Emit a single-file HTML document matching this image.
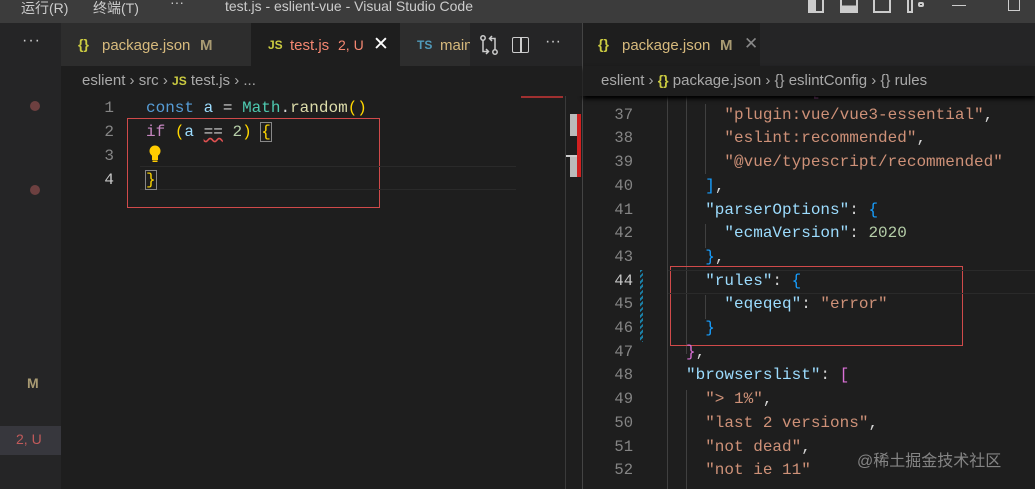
<!DOCTYPE html>
<html><head><meta charset="utf-8"><style>
*{margin:0;padding:0;box-sizing:border-box}
body{width:1035px;height:489px;overflow:hidden;background:#1e1e1e;position:relative;font-family:"Liberation Sans","Noto Sans CJK SC",sans-serif;color:#ccc}
.a{position:absolute;white-space:pre}
.m{font-family:"Liberation Mono",monospace}
.ln{color:#858585;text-align:right;width:40px}
.s{color:#ce9178}.k{color:#9cdcfe}.p{color:#d4d4d4}.b{color:#179fff}.y{color:#ffd700}.v{color:#da70d6}.kw{color:#569cd6}.c{color:#c586c0}.n{color:#b5cea8}.f{color:#dcdcaa}.t{color:#4ec9b0}
</style></head><body>
<!-- title bar -->
<div class="a" style="left:0;top:0;width:1035px;height:23px;background:#3c3c3c"></div>
<div class="a" style="left:21px;top:-2px;font-size:14px;color:#ccc">运行(R)</div>
<div class="a" style="left:93px;top:-2px;font-size:14px;color:#ccc">终端(T)</div>
<div class="a" style="left:170px;top:-6px;font-size:14px;color:#ccc">···</div>
<div class="a" style="left:225px;top:-2px;font-size:14px;color:#ccc">test.js - eslient-vue - Visual Studio Code</div>
<div class="a" style="left:808px;top:0;width:16px;height:13px;border:2px solid #ccc;border-top:none;background:linear-gradient(90deg,#ccc 50%,transparent 50%)"></div>
<div class="a" style="left:840px;top:0;width:18px;height:13px;border:2px solid #ccc;border-top:none;background:linear-gradient(0deg,#ccc 50%,transparent 50%)"></div>
<div class="a" style="left:873px;top:0;width:18px;height:13px;border:2px solid #ccc;border-top:none"></div>
<div class="a" style="left:907px;top:0;width:6px;height:13px;border:2px solid #ccc;border-top:none"></div>
<div class="a" style="left:918px;top:2px;width:6px;height:5px;border:2px solid #ccc;border-radius:2px"></div>
<div class="a" style="left:952px;top:5px;width:14px;height:1px;background:#ccc"></div>
<div class="a" style="left:1008px;top:0;width:12px;height:11px;border:1px solid #ccc;border-top:none"></div>
<!-- activity / sidebar -->
<div class="a" style="left:0;top:23px;width:61px;height:466px;background:#252526"></div>
<div class="a" style="left:22px;top:32px;font-size:16px;color:#ccc;letter-spacing:1px">···</div>
<div class="a" style="left:30px;top:101px;width:10px;height:10px;border-radius:50%;background:#6d4040"></div>
<div class="a" style="left:30px;top:185px;width:10px;height:10px;border-radius:50%;background:#6d4040"></div>
<div class="a" style="left:27px;top:375px;font-size:14px;font-weight:bold;color:#a89a72">M</div>
<div class="a" style="left:0;top:426px;width:61px;height:29px;background:#37373d"></div>
<div class="a" style="left:16px;top:431px;font-size:14px;color:#c05a5a">2, U</div>
<!-- left tab bar -->
<div class="a" style="left:61px;top:23px;width:522px;height:43px;background:#252526"></div>
<div class="a" style="left:61px;top:23px;width:190px;height:43px;background:#2d2d2d"></div>
<div class="a" style="left:78px;top:36px;font-size:14px;color:#cbcb41;font-weight:bold">{}</div>
<div class="a" style="left:102px;top:37px;font-size:15px;color:#d7ba7d">package.json</div>
<div class="a" style="left:200px;top:37px;font-size:15px;color:#a89a72;font-weight:bold">M</div>
<div class="a" style="left:251px;top:23px;width:149px;height:43px;background:#1e1e1e"></div>
<div class="a" style="left:268px;top:38px;font-size:12px;color:#cbcb41;font-weight:bold">JS</div>
<div class="a" style="left:290px;top:37px;font-size:15px;color:#f48771">test.js</div>
<div class="a" style="left:338px;top:37px;font-size:14px;color:#f48771">2, U</div>
<div class="a" style="left:373px;top:33px;font-size:19px;color:#fff">✕</div>
<div class="a" style="left:400px;top:23px;width:70px;height:43px;background:#2d2d2d;overflow:hidden">
 <div class="a" style="left:17px;top:15px;font-size:12px;color:#519aba;font-weight:bold">TS</div>
 <div class="a" style="left:40px;top:14px;font-size:15px;color:#d7ba7d">main</div></div>
<svg class="a" style="left:478px;top:34px" width="22" height="22" viewBox="0 0 22 22" fill="none" stroke="#ccc" stroke-width="1.5"><circle cx="5" cy="4" r="2.2"/><circle cx="17" cy="18" r="2.2"/><path d="M5 6.5v11h5M8 15l2.5 2.5L8 20M17 15.5v-11h-5M14 7L11.5 4.5 14 2"/></svg>
<div class="a" style="left:512px;top:37px;width:17px;height:16px;border:1.5px solid #ccc;border-radius:2px"></div>
<div class="a" style="left:520px;top:37px;width:1.5px;height:16px;background:#ccc"></div>
<div class="a" style="left:545px;top:33px;font-size:16px;color:#ccc">···</div>
<!-- left code -->
<div class="a" style="left:127px;top:118px;width:253px;height:90px;border:1px solid #d04a4a"></div>
<div class="a" style="left:140px;top:166px;width:376px;height:24px;border-top:1px solid #2a2a2a;border-bottom:1px solid #2a2a2a"></div>
<div class="a m ln" style="left:74px;top:96px;font-size:16px;line-height:24px">1
2
3
<span style="color:#c6c6c6">4</span></div>
<div class="a m" style="left:146px;top:96px;font-size:16px;line-height:24px"><span class="kw">const</span> <span class="k">a</span> <span class="p">=</span> <span class="t">Math</span><span class="p">.</span><span class="f">random</span><span class="y">()</span>
<span class="c">if</span> <span class="y">(</span><span class="k">a</span> <span class="p" style="text-decoration:underline wavy #e05050">==</span> <span class="n">2</span><span class="y">)</span> <span class="y" style="outline:1px solid #888">{</span>

<span class="y" style="outline:1px solid #888">}</span></div>
<svg class="a" style="left:148px;top:145px" width="14" height="18" viewBox="0 0 14 18"><circle cx="7" cy="6" r="5.5" fill="#ffcc00"/><rect x="4" y="10" width="6" height="5" fill="#ffcc00"/><rect x="4.5" y="15.5" width="5" height="1.5" fill="#ffcc00"/></svg>
<!-- minimap/scroll -->
<div class="a" style="left:521px;top:96px;width:42px;height:2px;background:#a03030"></div>
<div class="a" style="left:565px;top:96px;width:1px;height:393px;background:#3a3a3a"></div>
<div class="a" style="left:570px;top:114px;width:7px;height:22px;background:#bbb"></div>
<div class="a" style="left:570px;top:156px;width:7px;height:21px;background:#bbb"></div>
<div class="a" style="left:566px;top:155px;width:15px;height:2px;background:#ccc"></div>
<div class="a" style="left:577px;top:114px;width:4px;height:63px;background:#d02020"></div>
<div class="a" style="left:582px;top:23px;width:1px;height:466px;background:#444"></div>
<!-- right tab bar -->
<div class="a" style="left:583px;top:23px;width:452px;height:43px;background:#252526"></div>
<div class="a" style="left:583px;top:23px;width:177px;height:43px;background:#1e1e1e"></div>
<div class="a" style="left:598px;top:36px;font-size:14px;color:#cbcb41;font-weight:bold">{}</div>
<div class="a" style="left:622px;top:37px;font-size:15px;color:#d7ba7d">package.json</div>
<div class="a" style="left:720px;top:37px;font-size:15px;color:#a89a72;font-weight:bold">M</div>
<div class="a" style="left:744px;top:34px;font-size:17px;color:#888">✕</div>
<!-- right code -->
<div class="a" style="left:667px;top:96px;width:1px;height:393px;background:#404040"></div>
<div class="a" style="left:686px;top:96px;width:1px;height:258px;background:#404040"></div>
<div class="a" style="left:705px;top:104px;width:1px;height:70px;background:#404040"></div>
<div class="a" style="left:705px;top:224px;width:1px;height:24px;background:#404040"></div>
<div class="a" style="left:705px;top:295px;width:1px;height:24px;background:#404040"></div>
<div class="a" style="left:686px;top:390px;width:1px;height:99px;background:#404040"></div>
<div class="a" style="left:640px;top:270px;width:3px;height:72px;background:repeating-linear-gradient(135deg,#1b81a8 0 2px,transparent 2px 4px)"></div>
<div class="a" style="left:670px;top:266px;width:293px;height:80px;border:1px solid #d04a4a"></div>
<div class="a" style="left:668px;top:270px;width:367px;height:24px;border-top:1px solid #2a2a2a;border-bottom:1px solid #2a2a2a"></div>
<div class="a m ln" style="left:593px;top:80px;font-size:15.5px;line-height:23.7px">36
37
38
39
40
41
42
43
<span style="color:#c6c6c6">44</span>
45
46
47
48
49
50
51
52</div>
<div class="a m" style="left:686px;top:80px;font-size:16px;line-height:23.7px;color:#d4d4d4">  <span class="k">"extends"</span>: <span class="v">[</span>
    <span class="s">"plugin:vue/vue3-essential"</span>,
    <span class="s">"eslint:recommended"</span>,
    <span class="s">"@vue/typescript/recommended"</span>
  <span class="b">]</span>,
  <span class="k">"parserOptions"</span>: <span class="b">{</span>
    <span class="k">"ecmaVersion"</span>: <span class="n">2020</span>
  <span class="b">}</span>,
  <span class="k">"rules"</span>: <span class="b">{</span>
    <span class="k">"eqeqeq"</span>: <span class="s">"error"</span>
  <span class="b">}</span>
<span class="v">}</span>,
<span class="k">"browserslist"</span>: <span class="v">[</span>
  <span class="s">"&gt; 1%"</span>,
  <span class="s">"last 2 versions"</span>,
  <span class="s">"not dead"</span>,
  <span class="s">"not ie 11"</span></div>
<div class="a" style="left:583px;top:66px;width:452px;height:30px;background:#1e1e1e;box-shadow:0 3px 4px #000"></div>
<div class="a" style="left:601px;top:72px;font-size:15px;color:#a9a9a9">eslient › <b style="color:#cbcb41;font-size:14px">{}</b> package.json › {} eslintConfig › {} rules</div>
<div class="a" style="left:61px;top:66px;width:521px;height:30px;background:#1e1e1e"></div>
<div class="a" style="left:82px;top:72px;font-size:15px;color:#a9a9a9">eslient › src › <b style="color:#cbcb41;font-size:12px">JS</b> test.js › ...</div>
<div class="a" style="left:857px;top:447px;font-size:16px;color:rgba(200,200,200,0.6)">@稀土掘金技术社区</div>
</body></html>
